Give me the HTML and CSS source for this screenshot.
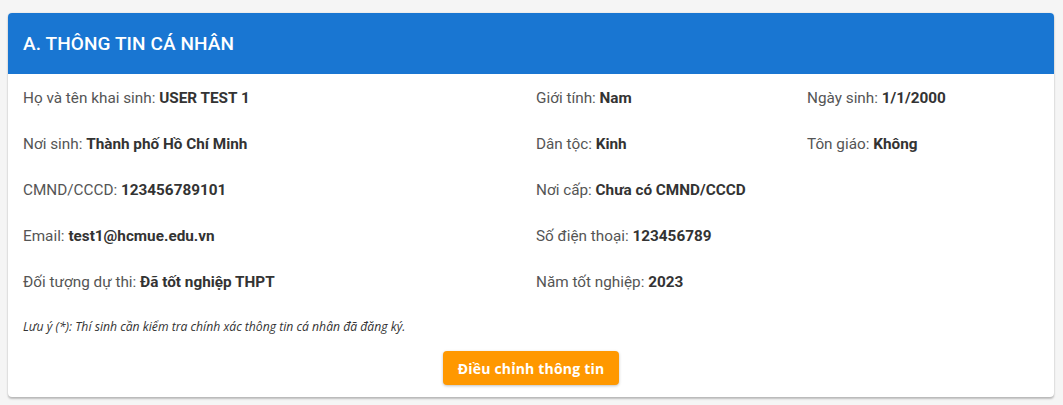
FILE: index.html
```html
<!DOCTYPE html>
<html lang="vi">
<head>
<meta charset="utf-8">
<link rel="stylesheet" href="styles.css">
</head>
<body>
<div class="card">
  <div class="card-header">A. THÔNG TIN CÁ NHÂN</div>
  <div class="card-body">
    <div class="grid">
      <div class="item">Họ và tên khai sinh: <b>USER TEST 1</b></div>
      <div class="item">Giới tính: <b>Nam</b></div>
      <div class="item">Ngày sinh: <b>1/1/2000</b></div>

      <div class="item">Nơi sinh: <b>Thành phố Hồ Chí Minh</b></div>
      <div class="item">Dân tộc: <b>Kinh</b></div>
      <div class="item">Tôn giáo: <b>Không</b></div>

      <div class="item">CMND/CCCD: <b>123456789101</b></div>
      <div class="item">Nơi cấp: <b>Chưa có CMND/CCCD</b></div>
      <div class="item"></div>

      <div class="item">Email: <b>test1@hcmue.edu.vn</b></div>
      <div class="item">Số điện thoại: <b>123456789</b></div>
      <div class="item"></div>

      <div class="item">Đối tượng dự thi: <b>Đã tốt nghiệp THPT</b></div>
      <div class="item">Năm tốt nghiệp: <b>2023</b></div>
      <div class="item"></div>
    </div>
    <p class="note">Lưu ý (*): Thí sinh cần kiểm tra chính xác thông tin cá nhân đã đăng ký.</p>
    <div class="actions">
      <button class="btn">Điều chỉnh thông tin</button>
    </div>
  </div>
</div>
</body>
</html>
```

FILE: styles.css
```css
* { box-sizing: border-box; }
html, body { margin: 0; padding: 0; }
body {
  background: #f5f5f5;
  font-family: Roboto, "Noto Sans", Arial, sans-serif;
  padding: 13px 9px 8px 8px;
}
.card {
  background: #fff;
  border-radius: 4px;
  box-shadow: 0 2px 2px rgba(0,0,0,0.22), 0 0 2px rgba(0,0,0,0.12);
  overflow: hidden;
}
.card-header {
  background: #1976d2;
  color: #fff;
  font-size: 19px;
  font-weight: 500;
  height: 61px;
  line-height: 61px;
  padding: 0 15px;
  letter-spacing: 0.1px;
}
.card-body {
  padding: 13px 15px 12px 15px;
}
.grid {
  display: grid;
  grid-template-columns: 513px 271px 1fr;
  grid-auto-rows: 46px;
}
.item {
  font-size: 15.3px;
  color: #555;
  line-height: 22px;
}
.item b {
  color: #333;
  font-weight: 700;
}
.note {
  margin: 0;
  font-family: "Open Sans", "Noto Sans", sans-serif;
  font-size: 12.2px;
  font-style: italic;
  color: #333;
  line-height: 16px;
  padding-top: 2px;
}
.actions {
  display: flex;
  justify-content: center;
  margin-top: 16px;
}
.btn {
  background: #ff9800;
  color: #fff;
  border: none;
  border-radius: 4px;
  font-family: "Open Sans", "Noto Sans", sans-serif;
  font-size: 14px;
  font-weight: 700;
  width: 176px;
  height: 34px;
  box-shadow: 0 1px 3px rgba(0,0,0,0.25);
  letter-spacing: 0.2px;
}
```
